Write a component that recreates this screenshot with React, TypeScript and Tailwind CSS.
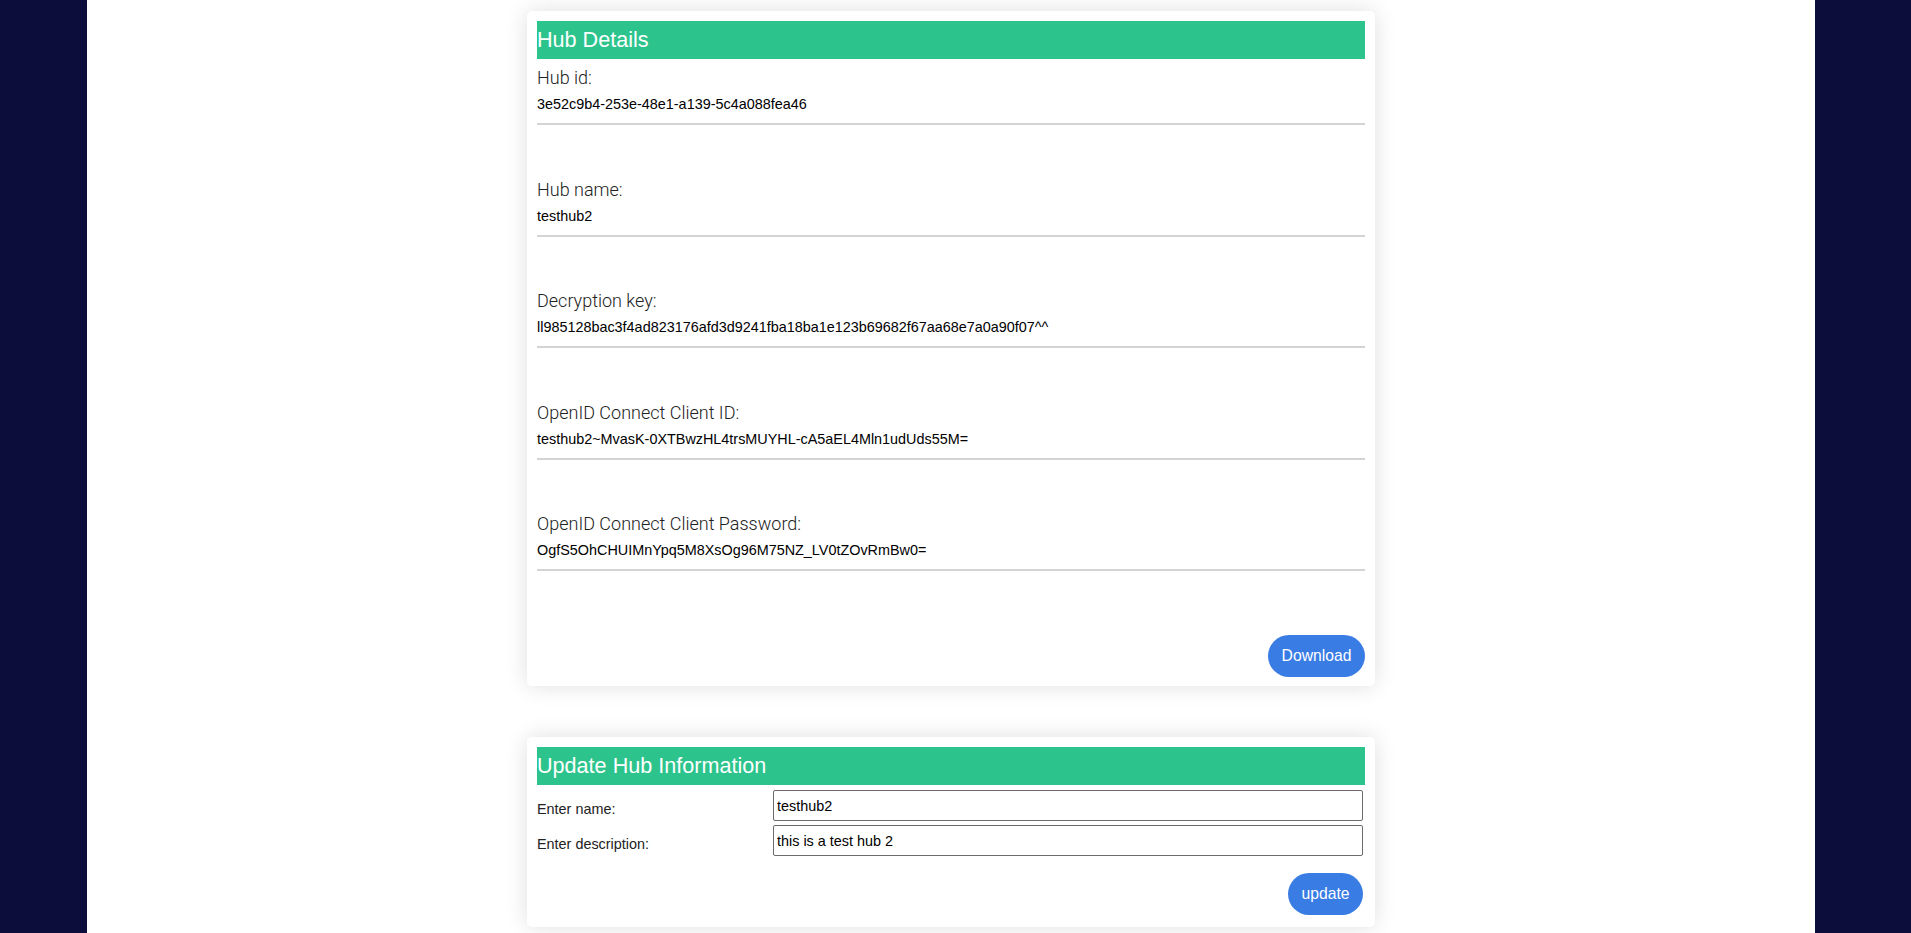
import React from "react";

const fields: { label: string; value: string }[] = [
  { label: "Hub id:", value: "3e52c9b4-253e-48e1-a139-5c4a088fea46" },
  { label: "Hub name:", value: "testhub2" },
  { label: "Decryption key:", value: "ll985128bac3f4ad823176afd3d9241fba18ba1e123b69682f67aa68e7a0a90f07^^" },
  { label: "OpenID Connect Client ID:", value: "testhub2~MvasK-0XTBwzHL4trsMUYHL-cA5aEL4Mln1udUds55M=" },
  { label: "OpenID Connect Client Password:", value: "OgfS5OhCHUIMnYpq5M8XsOg96M75NZ_LV0tZOvRmBw0=" },
];

export default function App() {
  return (
    <div className="flex min-h-[933px] w-full bg-[#0c0d3a] font-['Liberation_Sans',Arial,sans-serif]">
      <div className="w-[87px] shrink-0" />
      <main className="flex flex-1 flex-col items-center bg-white pt-[11px] pb-[7px]">
        {/* Hub Details card */}
        <section className="w-[848px] rounded-[5px] bg-white px-[10px] pt-[10px] pb-[9px] shadow-[0_0_22px_rgba(0,0,0,0.13)]">
          <h2 className="flex h-[38px] items-center bg-[#2cc48c] text-[21.6px] leading-none text-white">
            Hub Details
          </h2>
          <div className="flex flex-col">
            {fields.map((f, i) => (
              <div key={f.label} className={i === 0 ? "pt-[8px]" : "pt-[53.5px]"}>
                <div className="font-['Roboto',sans-serif] text-[18px] font-light leading-[22px] text-[#222]">
                  {f.label}
                </div>
                <div className="mt-[5px] text-[14.4px] leading-[20px] text-black">{f.value}</div>
                <div className="mt-[9px] h-[2px] bg-[#d4d4d4]" />
              </div>
            ))}
          </div>
          <div className="mt-[64px] flex justify-end">
            <button className="h-[42px] w-[97px] rounded-full bg-[#387ce4] text-[15.7px] text-white">
              Download
            </button>
          </div>
        </section>

        {/* Update Hub Information card */}
        <section className="mt-[51px] w-[848px] rounded-[5px] bg-white px-[10px] pt-[10px] pb-[12px] shadow-[0_0_22px_rgba(0,0,0,0.13)]">
          <h2 className="flex h-[38px] items-center bg-[#2cc48c] text-[21.6px] leading-none text-white">
            Update Hub Information
          </h2>
          <div className="mt-[5px] grid grid-cols-[236px_590px] gap-y-[4px]">
            <label className="flex items-center pt-[9px] text-[14.4px] text-[#222]">Enter name:</label>
            <input
              readOnly
              value="testhub2"
              className="h-[31px] rounded-[2px] border border-[#6b6b6b] px-[3px] text-[14.4px] text-black outline-none"
            />
            <label className="flex items-center pt-[9px] text-[14.4px] text-[#222]">Enter description:</label>
            <input
              readOnly
              value="this is a test hub 2"
              className="h-[31px] rounded-[2px] border border-[#6b6b6b] px-[3px] text-[14.4px] text-black outline-none"
            />
          </div>
          <div className="mt-[17px] flex justify-end pr-[2px]">
            <button className="h-[42px] w-[75px] rounded-full bg-[#387ce4] text-[15.7px] text-white">
              update
            </button>
          </div>
        </section>
      </main>
      <div className="w-[96px] shrink-0" />
    </div>
  );
}
